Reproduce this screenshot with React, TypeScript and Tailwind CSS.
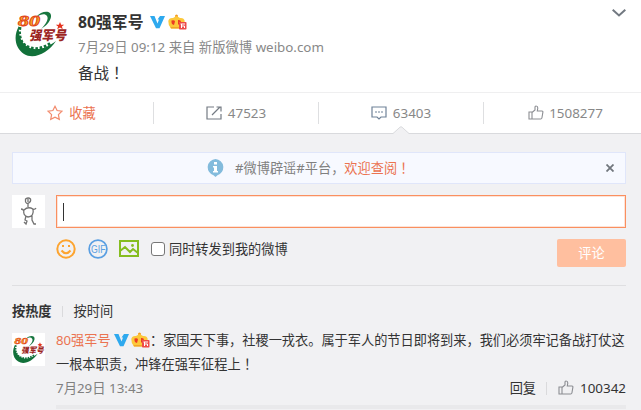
import React from "react";

function Logo({ className }: { className: string }) {
  return (
    <svg viewBox="0 0 54 48" className={className}>
      <path d="M22 7 C28 0 38 0 37 7 C36 12 32 16 27 19 C32 14 35 9 33 6 C31 3 27 4 22 7Z" fill="#17763f" />
      <path
        d="M5 16 C-1 26 1 38 10 44 C20 50 34 43 42 31 C33 38 22 42 14 37 C7 33 4 25 5 16Z"
        fill="#12713a"
      />
      <path d="M6 17 C4 28 8 36 17 38 C24 40 31 37 37 33" fill="none" stroke="#12713a" strokeWidth="3" strokeDasharray="2.6 1.8" />
      <text x="4" y="15.5" fontSize="15" fontWeight="900" fontStyle="italic" fill="#f6b023" stroke="#e2451c" strokeWidth=".8" textLength="22" lengthAdjust="spacingAndGlyphs" fontFamily="Liberation Serif, serif">
        80
      </text>
      <text x="15" y="30" fontSize="13" fontWeight="900" fontStyle="italic" fill="#9c2522" textLength="37" lengthAdjust="spacingAndGlyphs" fontFamily="Noto Sans CJK SC, sans-serif">
        强军号
      </text>
      <path d="M46 12l1.200 2.700h3l-2.300 1.800.9 2.800-2.800-1.700-2.800 1.700.9-2.800-2.300-1.800h3z" fill="#e5331f" />
    </svg>
  );
}

function Verified() {
  return (
    <svg viewBox="0 0 15 14" className="h-[14px] w-[15px] shrink-0">
      <path d="M0 1h4.500L7.500 8.500 9 4.500H7.500L10 1h5L9.500 13.300H6z" fill="#2ea9ee" />
    </svg>
  );
}

function Crown() {
  return (
    <svg viewBox="0 0 19 16" className="h-4 w-[19px] shrink-0">
      <circle cx="8.500" cy="2" r="1.500" fill="#f59b21" />
      <path d="M.3 7Q1 3.500 5 4L8.500 2 12 4q4-.5 4.700 3L15 14.500H3Q0 11 .3 7Z" fill="#fcc83a" />
      <path d="M3 14.500h9V13H2.500z" fill="#f2a52a" />
      <path d="M3.500 6.500q3-1 3.500 1L6 11Q3 10.500 3.500 6.500ZM10 6q3-.5 3 2h-2v2.500h-1z" fill="#ec3b24" />
      <rect x="11" y="8" width="7.500" height="7.500" rx=".8" fill="#ee4a48" />
      <path d="M12.500 10h4.500M13.500 10v4M13.500 12h3v2" stroke="#fff" fill="none" strokeWidth="1" />
    </svg>
  );
}

function Thumb() {
  return (
    <svg viewBox="0 0 16 16" className="h-4 w-4 shrink-0" fill="none" stroke="#8b8d92" strokeWidth="1.100">
      <path d="M1 7h3v7H1zM4 7.500 7 5V2q0-1 1-1 1.800 0 1.800 2L9.300 6H14q1 0 .9 1.200l-1 5.800q-.2 1-1.200 1H4z" />
    </svg>
  );
}

/* Full-width exclamation mark, centred in its cell. */
function Exclaim() {
  return <span lang="zh-TW" className="font-['Noto_Sans_CJK_TC',sans-serif]">！</span>;
}

export default function App() {
  return (
    <main className="h-[410px] w-[641px] overflow-hidden bg-[#f1f1f3] font-['Noto_Sans','Noto_Sans_CJK_SC',sans-serif] text-[13.200px] leading-5 text-[#333] whitespace-nowrap">
      <header className="flex h-[93px] border-b border-[#efeff0] bg-white pt-2.5 pr-[15px] pl-[14px]">
        <Logo className="h-12 w-[54px]" />
        <div className="ml-2.5 flex-1">
          <div className="flex h-6 items-center">
            <h1 className="w-[65px] text-[15.800px] font-bold">80强军号</h1>
            <span className="ml-[7px]"><Verified /></span>
            <span className="ml-[3px]"><Crown /></span>
          </div>
          <p className="mt-[3px] text-[13.350px] leading-5 text-[#888]">7月29日 09:12 来自 新版微博 weibo.com</p>
          <p className="mt-[3px] text-[15.500px] leading-6">备战<Exclaim /></p>
        </div>
        <svg viewBox="0 0 14 8" className="-mt-px h-2 w-[14px]" fill="none" stroke="#727981" strokeWidth="2">
          <path d="m.7.800 6.300 5.700L13.300.8" />
        </svg>
      </header>

      <nav className="relative flex h-[41px] border-b border-[#d9dadd] bg-white py-[9px] text-[#888]">
        <div className="flex w-[154px] shrink-0 items-center justify-center gap-[6px] border-r border-[#dedfe1] pr-2.5 text-[#eb7350]">
          <svg viewBox="0 0 16 16" className="h-4 w-4" fill="none" stroke="#f28b6d" strokeWidth="1.200">
            <path d="m8 1.300 2.100 4.200 4.800.7-3.500 3.400.9 4.800L8 12.200l-4.300 2.200.9-4.800L1.100 6.200l4.800-.7z" />
          </svg>
          收藏
        </div>
        <div className="flex w-[165px] shrink-0 items-center justify-center gap-[6px] border-r border-[#dedfe1]">
          <svg viewBox="0 0 16 14" className="h-[14px] w-4" fill="none" stroke="#747b83" strokeWidth="1.200">
            <path d="M8 1H1v12h14V8M6 9l8-8M10.500 1H15v4.500" />
          </svg>
          <span className="text-[13.400px]">47523</span>
        </div>
        <div className="flex w-[165px] shrink-0 items-center justify-center gap-[6px] border-r border-[#dedfe1]">
          <svg viewBox="0 0 16 14" className="h-[14px] w-4" fill="none" stroke="#6f8298" strokeWidth="1.200">
            <path d="M1 1h14v10h-5l-2 2-2-2H1z" />
            <path d="M4 6h8" strokeDasharray="2 1" />
          </svg>
          <span className="text-[13.400px]">63403</span>
        </div>
        <div className="flex w-[163px] shrink-0 items-center justify-center gap-[5px]">
          <Thumb />
          <span className="text-[13.400px]">1508277</span>
        </div>
        <svg viewBox="0 0 16 8" className="absolute -bottom-px left-[393px] h-2 w-4">
          <path d="M0 7.500 7 1.200q1-1 2 0l7 6.300V8H0z" fill="#f1f1f3" />
          <path d="M0 7.500 7 1.200q1-1 2 0l7 6.300" fill="none" stroke="#d9dadd" />
        </svg>
      </nav>

      <section className="px-3 pt-[18px]">
        <div className="mr-[3px] flex h-8 items-center border border-[#e0e6fa] bg-[#f7f9ff] pr-[11px] pl-[194px] text-[#808080]">
          <svg viewBox="0 0 17 18" className="mr-[11px] h-[18px] w-[17px]">
            <path d="M8.500 0a8.300 8.300 0 0 1 2 16.200L8.500 18l-2-1.800A8.300 8.300 0 0 1 8.500 0Z" fill="#83bbdc" />
            <path d="M7 3h3v2.500H7zM6 7h4v5h1v1.500H6V12h1V8.500H6z" fill="#fff" />
          </svg>
          <span>#微博辟谣#平台，<span className="text-[#eb7350]">欢迎查阅<Exclaim /></span></span>
          <svg viewBox="0 0 8 8" className="ml-auto h-2 w-2" stroke="#71767d" strokeWidth="1.800">
            <path d="m.5.500 7 7m0-7-7 7" />
          </svg>
        </div>
        <div className="mt-[11px] flex">
          <svg viewBox="0 0 33 33" className="h-[33px] w-[33px] bg-white" fill="none" stroke="#737373" strokeWidth="1.300">
            <path d="M13.500 4q3-2 5 0c1 4-4.500 6-5 2.500zM16 4v3M16 9v3M12 15q4-4 9-1c1 5-1 8-5 8-4-1-5-4-4-7ZM12 16q-1-2-3-2M20 14q3 1 4-1M14 21l-1 4 2 1-1 3-2-2M20 21v4l2 4h2" />
          </svg>
          <div className="ml-[11px] flex h-[33px] w-[570px] items-center border border-[#fa8f5f] bg-white pl-[6px] ring-1 ring-[#fde3d7] ring-inset">
            <span className="h-[18px] w-px bg-[#333]" />
          </div>
        </div>
        <div className="mt-[11px] ml-[44px] flex h-[28px] items-start">
          <svg viewBox="0 0 20 20" className="h-5 w-5" fill="none" stroke="#fda42f" strokeWidth="2">
            <circle cx="10" cy="10" r="8.700" />
            <path d="M5.500 11.500q4.500 5.500 9 0" />
            <path d="M6 7h2M12 7h2" />
          </svg>
          <svg viewBox="0 0 20 20" className="ml-3 h-5 w-5" fill="none" stroke="#5a9fe2" strokeWidth="1.700">
            <circle cx="10" cy="10" r="8.900" />
            <text x="3" y="13.800" stroke="none" className="fill-[#5a9fe2] font-['Liberation_Sans',sans-serif] text-[10.500px]" textLength="14.500" lengthAdjust="spacingAndGlyphs">GIF</text>
          </svg>
          <svg viewBox="0 0 20 17" className="mt-px ml-[11px] h-[17px] w-5" fill="none" stroke="#86bd20" strokeWidth="2">
            <path d="M1 1h18v15H1zM1 11l5-4 5 5 3-3 5 4" />
            <circle cx="13.500" cy="5.500" r="1.400" fill="#86bd20" stroke="none" />
          </svg>
          <label className="ml-3 flex h-5 items-center gap-1">
            <span className="h-[14px] w-[14px] rounded-[3px] border border-[#777] bg-white" />
            同时转发到我的微博
          </label>
          <button className="mr-[3px] ml-auto h-[28px] w-[69px] rounded-[2px] bg-[#ffbf9f] text-white">评论</button>
        </div>
        <div className="mt-[18px] mr-[3px] h-px bg-[#dfdfe1]" />
        <div className="mt-[15px] flex h-5 items-center">
          <strong>按热度</strong>
          <span className="mr-[11px] ml-[10px] h-[11px] w-px bg-[#dadadc]" />
          <span>按时间</span>
        </div>
        <article className="mt-[6px] flex">
          <div className="mt-[6px] flex h-[33px] w-[33px] items-center bg-white">
            <Logo className="h-[29px] w-[33px]" />
          </div>
          <div className="ml-[11px] w-[570px]">
            <div className="flex h-[25px] items-center">
              <span className="w-[55px] text-[#eb7350]">80强军号</span>
              <span className="ml-[3px]"><Verified /></span>
              <span className="ml-[2px]"><Crown /></span>
              <span>：家国天下事，社稷一戎衣。属于军人的节日即将到来，我们必须牢记备战打仗这</span>
            </div>
            <p className="leading-6">一根本职责，冲锋在强军征程上<Exclaim /></p>
            <div className="flex h-6 items-center">
              <time className="text-[13.350px] text-[#808080]">7月29日 13:43</time>
              <span className="ml-auto">回复</span>
              <span className="mr-[11px] ml-[10px] h-[13px] w-px bg-[#dadadc]" />
              <Thumb />
              <span className="ml-[6px] text-[13.400px]">100342</span>
            </div>
            <div className="mt-[5px] h-1 bg-[#e9e9eb]" />
          </div>
        </article>
      </section>
    </main>
  );
}
